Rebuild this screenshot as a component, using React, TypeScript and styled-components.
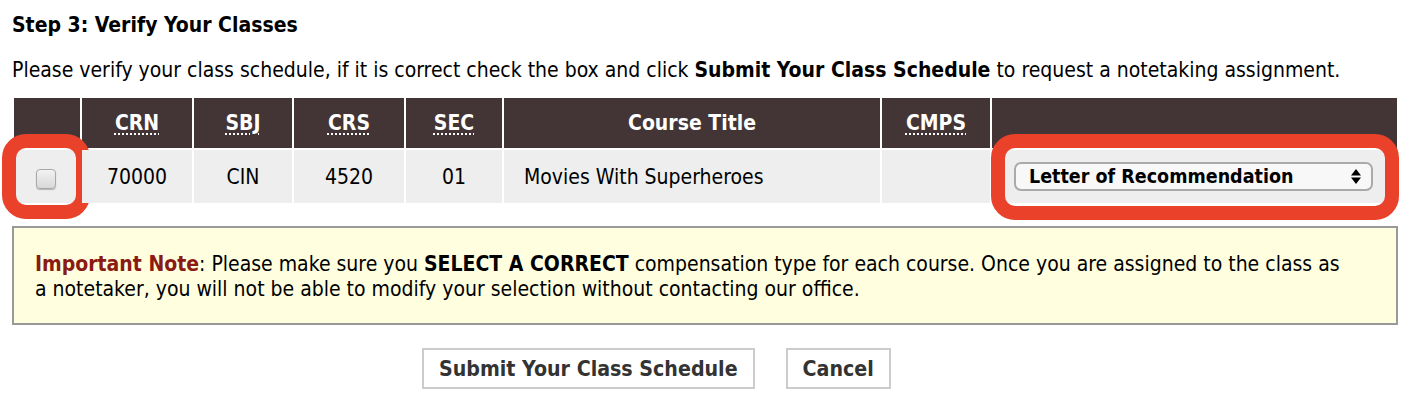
import React, { useState } from 'react';
import styled, { createGlobalStyle } from 'styled-components';

const GlobalStyle = createGlobalStyle`
  html, body {
    margin: 0;
    padding: 0;
    background: #ffffff;
  }
  body {
    font-family: "DejaVu Sans Condensed", "DejaVu Sans", sans-serif;
    color: #000;
  }
`;

const Page = styled.div`
  padding: 11px 12px 0 12px;
  width: 1410px;
  box-sizing: border-box;
`;

const Heading = styled.h3`
  margin: 0;
  font-size: 21px;
  font-weight: bold;
  line-height: 28px;
`;

const Intro = styled.p`
  margin: 18px 0 0 0;
  font-size: 21px;
  line-height: 26px;
`;

const Schedule = styled.table`
  margin-top: 13px;
  width: 1387px;
  table-layout: fixed;
  border-spacing: 2px;
  border-collapse: separate;
  font-size: 21px;
`;

const HeadCell = styled.th`
  background: #433535;
  color: #ffffff;
  height: 50px;
  padding: 0;
  font-weight: bold;
  text-align: center;
  vertical-align: middle;
`;

const Abbr = styled.abbr`
  text-decoration: underline dotted;
  text-underline-offset: 3px;
  text-decoration-thickness: 2px;
`;

const Cell = styled.td<{ $align?: 'left' | 'center' }>`
  position: relative;
  background: #eeeeee;
  height: 53px;
  padding: 0 ${({ $align }) => ($align === 'left' ? '20px' : '0')};
  text-align: ${({ $align }) => $align || 'center'};
  vertical-align: middle;
`;

const Highlight = styled.div<{ $l: number; $r: number; $t: number; $b: number }>`
  position: absolute;
  left: ${({ $l }) => $l}px;
  right: ${({ $r }) => $r}px;
  top: ${({ $t }) => $t}px;
  bottom: ${({ $b }) => $b}px;
  border: 14px solid #e9412a;
  border-radius: 24px;
  pointer-events: none;
`;

const Check = styled.input`
  appearance: none;
  width: 20px;
  height: 20px;
  margin: 3px 2px 0 0;
  border: 1px solid #a8a8a8;
  border-radius: 4px;
  background: linear-gradient(#f2f2f2, #d8d8d8);
  box-shadow: 0 1px 1px rgba(0, 0, 0, 0.25);
  vertical-align: middle;
`;

const SelectWrap = styled.div`
  position: relative;
  margin: 0 24px 0 22px;
`;

const Select = styled.select`
  appearance: none;
  display: block;
  width: 100%;
  height: 29px;
  padding: 0 30px 0 13px;
  border: 2px solid #aaaaaa;
  border-radius: 7px;
  background: #f8f8f8;
  font-family: inherit;
  font-size: 19.5px;
  font-weight: bold;
  color: #000;
`;

const Arrows = styled.svg`
  position: absolute;
  right: 11px;
  top: 6px;
  pointer-events: none;
`;

const Note = styled.div`
  margin-top: 21px;
  border: 2px solid #999999;
  background: #ffffe0;
  padding: 24px 46px 21px 21px;
  font-size: 21px;
  line-height: 25px;
`;

const NoteLabel = styled.span`
  color: #8b1a12;
  font-weight: bold;
`;

const Actions = styled.div`
  display: flex;
  gap: 31px;
  padding-left: 410px;
  margin-top: 23px;
`;

const Button = styled.button`
  height: 41px;
  padding: 0 15px;
  background: #ffffff;
  border: 2px solid #cccccc;
  font-family: inherit;
  font-size: 21.2px;
  font-weight: bold;
  color: #333333;
  cursor: pointer;
`;

const App: React.FC = () => {
  const [checked, setChecked] = useState(false);
  const [comp, setComp] = useState('letter');

  return (
    <Page>
      <GlobalStyle />
      <Heading>Step 3: Verify Your Classes</Heading>
      <Intro>
        Please verify your class schedule, if it is correct check the box and click{' '}
        <b>Submit Your Class Schedule</b> to request a notetaking assignment.
      </Intro>
      <Schedule>
        <colgroup>
          <col style={{ width: 66 }} />
          <col style={{ width: 110 }} />
          <col style={{ width: 98 }} />
          <col style={{ width: 110 }} />
          <col style={{ width: 96 }} />
          <col style={{ width: 376 }} />
          <col style={{ width: 108 }} />
          <col />
        </colgroup>
        <thead>
          <tr>
            <HeadCell />
            <HeadCell><Abbr title="Course Reference Number">CRN</Abbr></HeadCell>
            <HeadCell><Abbr title="Subject">SBJ</Abbr></HeadCell>
            <HeadCell><Abbr title="Course">CRS</Abbr></HeadCell>
            <HeadCell><Abbr title="Section">SEC</Abbr></HeadCell>
            <HeadCell>Course Title</HeadCell>
            <HeadCell><Abbr title="Campus">CMPS</Abbr></HeadCell>
            <HeadCell />
          </tr>
        </thead>
        <tbody>
          <tr>
            <Cell>
              <Check type="checkbox" checked={checked} onChange={e => setChecked(e.target.checked)} />
              <Highlight $l={-12} $r={-10} $t={-16} $b={-16} />
            </Cell>
            <Cell>70000</Cell>
            <Cell>CIN</Cell>
            <Cell>4520</Cell>
            <Cell>01</Cell>
            <Cell $align="left">Movies With Superheroes</Cell>
            <Cell />
            <Cell>
              <SelectWrap>
                <Select value={comp} onChange={e => setComp(e.target.value)}>
                  <option value="letter">Letter of Recommendation</option>
                  <option value="credit">Course Credit</option>
                  <option value="pay">Payment</option>
                </Select>
                <Arrows width="12" height="17" viewBox="0 0 12 17">
                  <path d="M6 1 L11 7.5 L1 7.5 Z M1 9.5 L11 9.5 L6 16 Z" fill="#000" />
                </Arrows>
              </SelectWrap>
              <Highlight $l={-1} $r={-2} $t={-16} $b={-17} />
            </Cell>
          </tr>
        </tbody>
      </Schedule>
      <Note>
        <NoteLabel>Important Note</NoteLabel>: Please make sure you <b>SELECT A CORRECT</b> compensation
        type for each course. Once you are assigned to the class as a notetaker, you will not be able to
        modify your selection without contacting our office.
      </Note>
      <Actions>
        <Button type="button">Submit Your Class Schedule</Button>
        <Button type="button">Cancel</Button>
      </Actions>
    </Page>
  );
};

export default App;
